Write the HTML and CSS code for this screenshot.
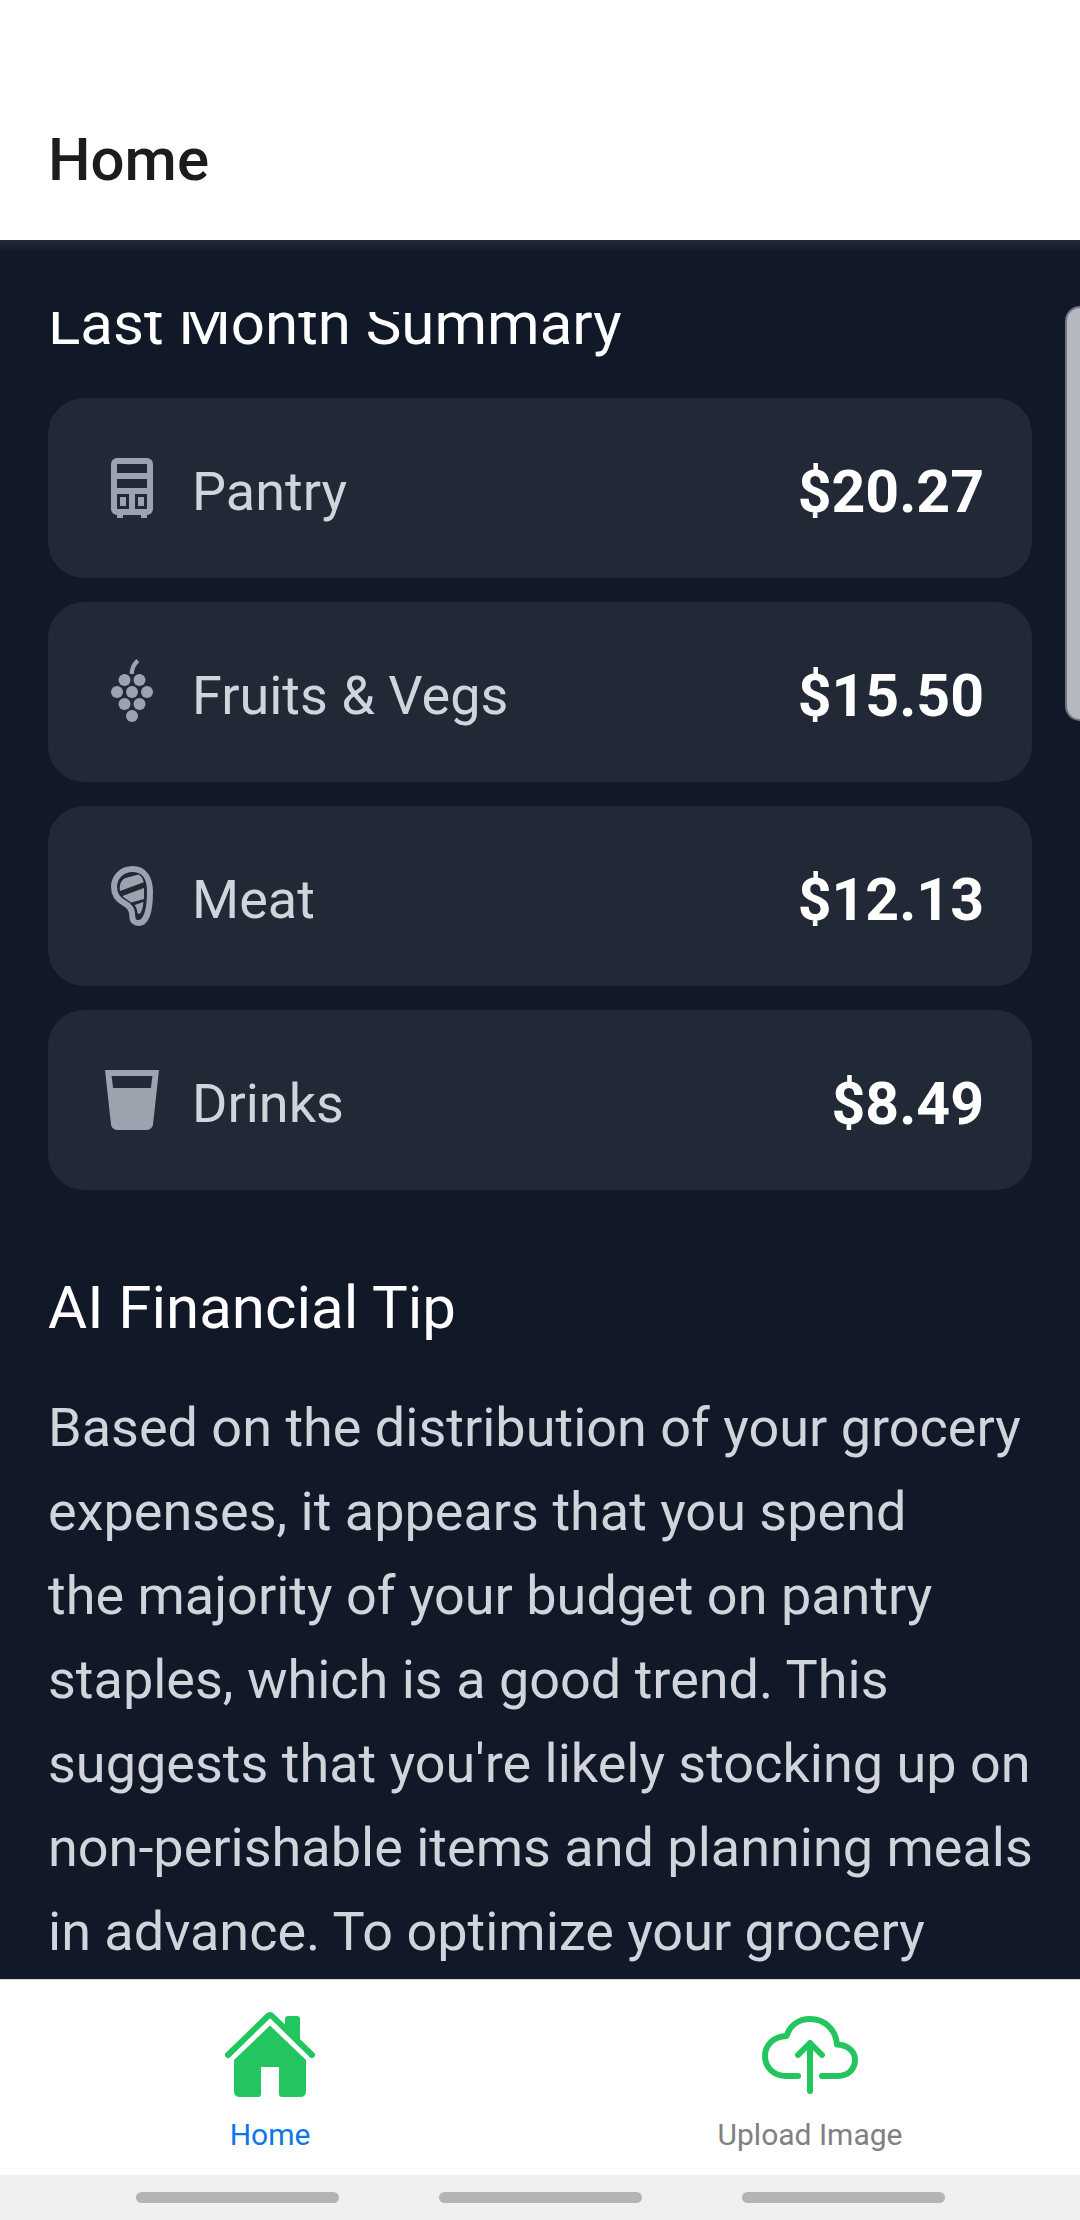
FILE: index.html
```html
<!DOCTYPE html>
<html lang="en">
<head>
<meta charset="utf-8">
<meta name="viewport" content="width=device-width, initial-scale=1">
<title>Home</title>
<link rel="stylesheet" href="styles.css">
</head>
<body>
<div class="app">
  <header class="header"><h1 class="header-title">Home</h1></header>

  <main class="screen">
    <div class="scroll">
      <section class="summary">
        <h2 class="section-title">Last Month Summary</h2>
        <ul class="cards">
          <li class="card">
            <svg class="card-icon" viewBox="0 0 24 24" aria-hidden="true"><path fill-rule="evenodd" d="M7 2H17A2 2 0 0 1 19 4V19A2 2 0 0 1 17 21V22H15V21H9V22H7V21A2 2 0 0 1 5 19V4A2 2 0 0 1 7 2ZM7 4V7H17V4ZM7 9V12H17V9ZM7 14V19H11V14ZM13 14V19H17V14Z"/><path d="M8 15H10V18H8ZM14 15H16V18H14Z"/></svg>
            <span class="card-name">Pantry</span>
            <span class="card-price">$20.27</span>
          </li>
          <li class="card">
            <svg class="card-icon" viewBox="0 0 24 24" aria-hidden="true"><circle cx="9.5" cy="8" r="2"/><circle cx="14.5" cy="8" r="2"/><circle cx="7" cy="12" r="2"/><circle cx="12" cy="12" r="2"/><circle cx="17" cy="12" r="2"/><circle cx="9.5" cy="16" r="2"/><circle cx="14.5" cy="16" r="2"/><circle cx="12" cy="20" r="2"/><path d="M11.2 6C11.3 3.8 12.1 2.2 13.5 1L14.4 2.1C13.2 3.2 12.7 4.4 12.6 6Z"/></svg>
            <span class="card-name">Fruits &amp; Vegs</span>
            <span class="card-price">$15.50</span>
          </li>
          <li class="card">
            <svg class="card-icon" viewBox="0 0 24 24" aria-hidden="true"><path class="outline" d="M12.2 3C8.5 3 6 5.8 6 9C6 11.8 7.5 13.4 9.5 14.4C11.5 15.4 12.2 16.8 12.1 18.8C12.1 20.3 13 21 14.2 21C17 21 18 16 18 10.5C18 6 16 3 12.2 3Z"/><path d="M8 10.3C7.7 8.5 8.2 7 9.6 6.1L14.2 4.8C15.2 5.4 15.7 6.3 15.9 7.4ZM8.8 12L16 9.3V13L11.7 14.2C10.7 13.2 9.5 12.9 8.8 12ZM12.9 15L15.8 14C15.7 15.5 15.4 16.7 14.9 17.6C14.5 18.1 13.9 18 13.8 17.4C13.7 16.5 13.4 15.7 12.9 15Z"/></svg>
            <span class="card-name">Meat</span>
            <span class="card-price">$12.13</span>
          </li>
          <li class="card">
            <svg class="card-icon" viewBox="0 0 24 24" aria-hidden="true"><path fill-rule="evenodd" d="M18.3 8H5.7L5.2 4H18.8ZM3 2L5 20.2C5.1 21.2 6 22 7 22H17C18 22 18.9 21.2 19 20.2L21 2Z"/></svg>
            <span class="card-name">Drinks</span>
            <span class="card-price">$8.49</span>
          </li>
        </ul>
      </section>

      <section class="tip">
        <h2 class="section-title">AI Financial Tip</h2>
        <p class="tip-text">Based on the distribution of your grocery expenses, it appears that you spend<br>the majority of your budget on pantry staples, which is a good trend. This suggests that you're likely stocking up on non-perishable items and planning meals in advance. To optimize your grocery</p>
      </section>
    </div>
  </main>

  <nav class="tabs">
    <a class="tab tab-active" href="#home" aria-current="page">
      <svg class="tab-icon" viewBox="-3 -3 96 96" aria-hidden="true"><path class="tab-line" d="M3 45L42.5 6.5Q45 4 47.5 6.5L87 45"/><path class="tab-fill" d="M60 19V9Q60 6 63 6H72Q75 6 75 9V34ZM45 15.5L81 50V81Q81 87 75 87H57Q54 87 54 84V57H36V84Q36 87 33 87H15Q9 87 9 81V50Z"/></svg>
      <span>Home</span>
    </a>
    <a class="tab" href="#upload">
      <svg class="tab-icon" viewBox="0 0 96 96" aria-hidden="true"><path class="tab-line" d="M36 69H24C12 69 3 60.5 3 49C3 38 11.5 29.5 24.5 29C28 18.5 36.5 12 48 12C63 12 74 23 75 37.5C86 38 93 44.5 93 53C93 62 86 69 76 69H60M48 84V36M36 48L48 36L60 48"/></svg>
      <span>Upload Image</span>
    </a>
  </nav>

  <div class="system-bar"><i class="system-pill"></i><i class="system-pill"></i><i class="system-pill"></i></div>
  <div class="edge-handle"></div>
</div>
</body>
</html>
```
FILE: styles.css
```css
* {
  box-sizing: border-box;
}

body {
  margin: 0;
  font-family: Roboto, "Liberation Sans", sans-serif;
}

h1, h2, p, ul {
  margin: 0;
  padding: 0;
}

.app {
  position: relative;
  display: flex;
  flex-direction: column;
  height: 100vh;
  overflow: hidden;
  background: #111827;
}

.header {
  padding: 124px 48px 44px;
  background: #fff;
}

.header-title {
  font-size: 60px;
  line-height: 72px;
  font-weight: 500;
  color: #1c1c1e;
}

.screen {
  display: flex;
  flex: 1;
  min-height: 0;
  padding-top: 72px;
  background: linear-gradient(#242b3b, #111827 12px);
}

.scroll {
  flex: 1;
  padding: 0 48px;
  overflow: hidden;
}

/* The list rests part-way scrolled, under the top edge of its viewport. */
.summary {
  margin-top: -30px;
}

.section-title {
  font-size: 60px;
  line-height: 84px;
  font-weight: 400;
  color: #fff;
}

.cards {
  display: flex;
  flex-direction: column;
  gap: 24px;
  margin-top: 32px;
  list-style: none;
}

.card {
  display: flex;
  align-items: center;
  gap: 24px;
  height: 180px;
  padding: 0 48px;
  border-radius: 36px;
  background: #212936;
}

.card-icon {
  width: 72px;
  height: 72px;
  fill: #9ca3af;
}

.outline {
  fill: none;
  stroke: #9ca3af;
  stroke-width: 2;
}

.card-name,
.card-price {
  padding-top: 8px;
  line-height: 84px;
}

.card-name {
  flex: 1;
  font-size: 54px;
  color: #d1d5db;
}

.card-price {
  font-size: 59px;
  font-weight: 700;
  color: #fff;
}

.tip {
  margin-top: 76px;
}

/* Lines may run a little past the cards before they wrap. */
.tip-text {
  margin: 36px -8px 0 0;
  font-size: 54px;
  line-height: 84px;
  color: #d1d5db;
}

.tabs {
  display: flex;
  border-top: 1px solid #d8d8d8;
  background: #fff;
}

.tab {
  display: flex;
  flex: 1;
  flex-direction: column;
  align-items: center;
  gap: 14px;
  padding: 27px 0 22px;
  font-size: 30px;
  line-height: 36px;
  color: #808080;
  text-decoration: none;
}

.tab-active {
  color: #0a78e6;
}

.tab-icon {
  width: 96px;
  height: 96px;
}

.tab-line {
  fill: none;
  stroke: #22c55e;
  stroke-width: 6;
  stroke-linecap: round;
  stroke-linejoin: round;
}

.tab-fill {
  fill: #22c55e;
}

.system-bar {
  display: flex;
  justify-content: center;
  align-items: center;
  gap: 100px;
  height: 45px;
  background: #f0f0f0;
}

.system-pill {
  width: 203px;
  height: 11px;
  border-radius: 6px;
  background: #b4b4b4;
}

.edge-handle {
  position: absolute;
  top: 306px;
  right: 0;
  width: 15px;
  height: 415px;
  border: 2px solid #73747f;
  border-right: 0;
  border-radius: 15px 0 0 15px;
  background: #b6b8c1;
}
```
